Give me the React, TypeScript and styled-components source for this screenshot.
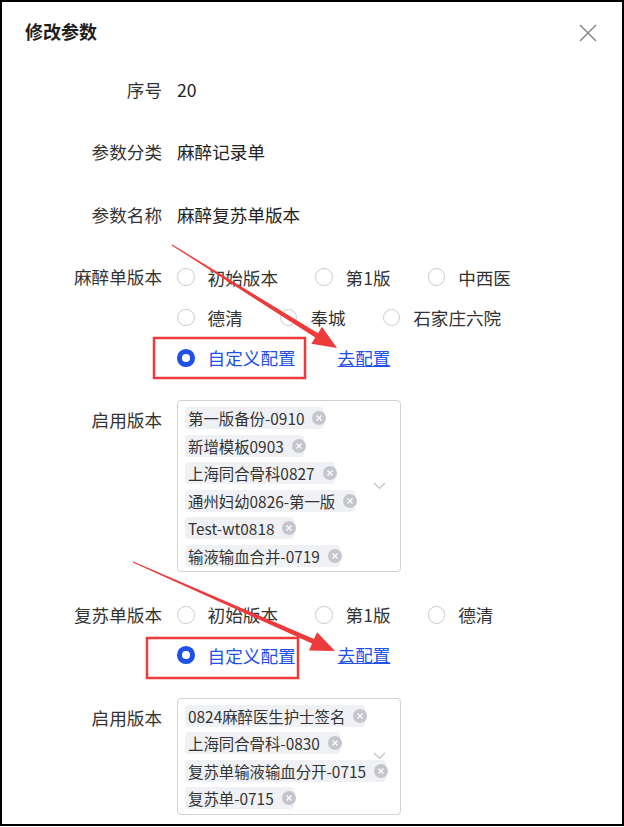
import styled, { createGlobalStyle } from 'styled-components'

const GlobalStyle = createGlobalStyle`
  html, body {
    margin: 0;
    padding: 0;
    background: #ffffff;
  }
`

const BLUE = '#1f50e8'
const RED = '#ee3a3a'

const Frame = styled.div`
  position: relative;
  width: 624px;
  height: 826px;
  border: 2px solid #000000;
  box-sizing: border-box;
  background: #ffffff;
  overflow: hidden;
  font-family: "Noto Sans CJK SC", "Microsoft YaHei", sans-serif;
  color: #333333;
`

const Header = styled.div`
  display: flex;
  align-items: center;
  justify-content: space-between;
  height: 58px;
  padding: 0 24px 0 23px;
`

const Title = styled.h1`
  margin: 0;
  font-size: 18px;
  font-weight: 700;
  color: #1f1f1f;
`

const CloseButton = styled.button`
  display: flex;
  align-items: center;
  justify-content: center;
  width: 20px;
  height: 20px;
  padding: 0;
  margin-top: 3px;
  border: none;
  background: none;
  cursor: pointer;
`

const Body = styled.div`
  padding: 10px 22px 0 23px;
`

const FormItem = styled.div`
  display: flex;
  align-items: flex-start;
  margin-bottom: 22.3px;
`

const Label = styled.div`
  width: 137px;
  flex-shrink: 0;
  margin-right: 15px;
  text-align: right;
  font-size: 17.6px;
  line-height: 40px;
  color: #333333;
`

const Value = styled.div`
  font-size: 17.6px;
  line-height: 40px;
  color: #222222;
`

const RadioGroup = styled.div`
  flex: 1;
  display: flex;
  flex-wrap: wrap;
  align-items: center;
  column-gap: 37px;
`

const RadioOption = styled.label<{ $checked?: boolean }>`
  display: inline-flex;
  align-items: center;
  height: 40.4px;
  font-size: 17.6px;
  color: ${p => (p.$checked ? BLUE : '#333333')};
  cursor: pointer;
`

const RadioDot = styled.span<{ $checked?: boolean }>`
  width: 17.6px;
  height: 17.6px;
  margin-right: 13px;
  border-radius: 50%;
  box-sizing: border-box;
  background: #ffffff;
  border: ${p => (p.$checked ? `5.6px solid ${BLUE}` : '1px solid #c9cad3')};
`

const ConfigLink = styled.a`
  margin-left: 5px;
  font-size: 17.6px;
  line-height: 40.4px;
  color: ${BLUE};
  text-decoration: underline;
  cursor: pointer;
`

const SelectBox = styled.div`
  position: relative;
  width: 224px;
  box-sizing: border-box;
  padding: 3px 0 2px 7px;
  border: 1px solid #cfd0d8;
  border-radius: 4px;
  display: flex;
  flex-direction: column;
  align-items: flex-start;
`

const Chevron = styled.svg`
  position: absolute;
  right: 14px;
  top: 50%;
  margin-top: -4px;
  z-index: 0;
`

const Tag = styled.span`
  position: relative;
  z-index: 1;
  display: inline-flex;
  align-items: center;
  height: 22px;
  margin: 2.75px 0;
  padding-left: 3px;
  border-radius: 4px;
  background: #f0f1f4;
  font-size: 15.4px;
  color: #333333;
  white-space: nowrap;
`

const TagClose = styled.span`
  display: inline-flex;
  align-items: center;
  justify-content: center;
  width: 14px;
  height: 14px;
  margin-left: 8px;
  margin-right: -2px;
  border-radius: 50%;
  background: #c5c6cd;
`

const Overlay = styled.svg`
  position: absolute;
  left: -2px;
  top: -2px;
  pointer-events: none;
`

type Opt = { label: string; checked?: boolean }

const anesthesiaOpts: Opt[] = [
  { label: '初始版本' },
  { label: '第1版' },
  { label: '中西医' },
  { label: '德清' },
  { label: '奉城' },
  { label: '石家庄六院' },
  { label: '自定义配置', checked: true },
]

const recoveryOpts: Opt[] = [
  { label: '初始版本' },
  { label: '第1版' },
  { label: '德清' },
  { label: '自定义配置', checked: true },
]

const anesthesiaTags = [
  '第一版备份-0910',
  '新增模板0903',
  '上海同合骨科0827',
  '通州妇幼0826-第一版',
  'Test-wt0818',
  '输液输血合并-0719',
]

const recoveryTags = [
  '0824麻醉医生护士签名',
  '上海同合骨科-0830',
  '复苏单输液输血分开-0715',
  '复苏单-0715',
]

function Radios({ options }: { options: Opt[] }) {
  return (
    <RadioGroup>
      {options.map(o => (
        <RadioOption key={o.label} $checked={o.checked}>
          <RadioDot $checked={o.checked} />
          {o.label}
        </RadioOption>
      ))}
      <ConfigLink>去配置</ConfigLink>
    </RadioGroup>
  )
}

function TagSelect({ tags }: { tags: string[] }) {
  return (
    <SelectBox>
      {tags.map(t => (
        <Tag key={t}>
          {t}
          <TagClose>
            <svg width="8" height="8" viewBox="0 0 8 8">
              <path d="M1.5 1.5 L6.5 6.5 M6.5 1.5 L1.5 6.5" stroke="#ffffff" strokeWidth="1.2" />
            </svg>
          </TagClose>
        </Tag>
      ))}
      <Chevron width="13" height="8" viewBox="0 0 13 8">
        <path d="M1 1 L6.5 6.5 L12 1" fill="none" stroke="#c2c3cb" strokeWidth="1.2" />
      </Chevron>
    </SelectBox>
  )
}

// tapered shaft plus a filled head, like a screenshot-tool arrow
function arrowPoints(x1: number, y1: number, x2: number, y2: number) {
  const dx = x2 - x1
  const dy = y2 - y1
  const len = Math.hypot(dx, dy)
  const ux = dx / len
  const uy = dy / len
  const nx = -uy
  const ny = ux
  const bx = x2 - 24 * ux
  const by = y2 - 24 * uy
  const pts = [
    [x1 + 0.5 * nx, y1 + 0.5 * ny],
    [bx + 2.5 * nx, by + 2.5 * ny],
    [bx + 10 * nx, by + 10 * ny],
    [x2, y2],
    [bx - 10 * nx, by - 10 * ny],
    [bx - 2.5 * nx, by - 2.5 * ny],
    [x1 - 0.5 * nx, y1 - 0.5 * ny],
  ]
  return pts.map(p => p.map(v => v.toFixed(1)).join(',')).join(' ')
}

function Annotations() {
  return (
    <Overlay width="624" height="827" viewBox="0 0 624 827">
      <rect x="154" y="338" width="151" height="40" fill="none" stroke={RED} strokeWidth="2.5" />
      <rect x="147" y="638" width="151" height="40" fill="none" stroke={RED} strokeWidth="2.5" />
      <polygon points={arrowPoints(172, 245, 337, 348)} fill={RED} />
      <polygon points={arrowPoints(133, 562, 335, 651)} fill={RED} />
    </Overlay>
  )
}

export default function App() {
  return (
    <>
      <GlobalStyle />
      <Frame>
        <Header>
          <Title>修改参数</Title>
          <CloseButton aria-label="关闭">
            <svg width="18" height="18" viewBox="0 0 18 18">
              <path d="M1 1 L17 17 M17 1 L1 17" stroke="#8c8c8c" strokeWidth="1.6" />
            </svg>
          </CloseButton>
        </Header>
        <Body>
          <FormItem>
            <Label>序号</Label>
            <Value>20</Value>
          </FormItem>
          <FormItem>
            <Label>参数分类</Label>
            <Value>麻醉记录单</Value>
          </FormItem>
          <FormItem>
            <Label>参数名称</Label>
            <Value>麻醉复苏单版本</Value>
          </FormItem>
          <FormItem>
            <Label>麻醉单版本</Label>
            <Radios options={anesthesiaOpts} />
          </FormItem>
          <FormItem>
            <Label>启用版本</Label>
            <TagSelect tags={anesthesiaTags} />
          </FormItem>
          <FormItem>
            <Label>复苏单版本</Label>
            <Radios options={recoveryOpts} />
          </FormItem>
          <FormItem>
            <Label>启用版本</Label>
            <TagSelect tags={recoveryTags} />
          </FormItem>
        </Body>
        <Annotations />
      </Frame>
    </>
  )
}
